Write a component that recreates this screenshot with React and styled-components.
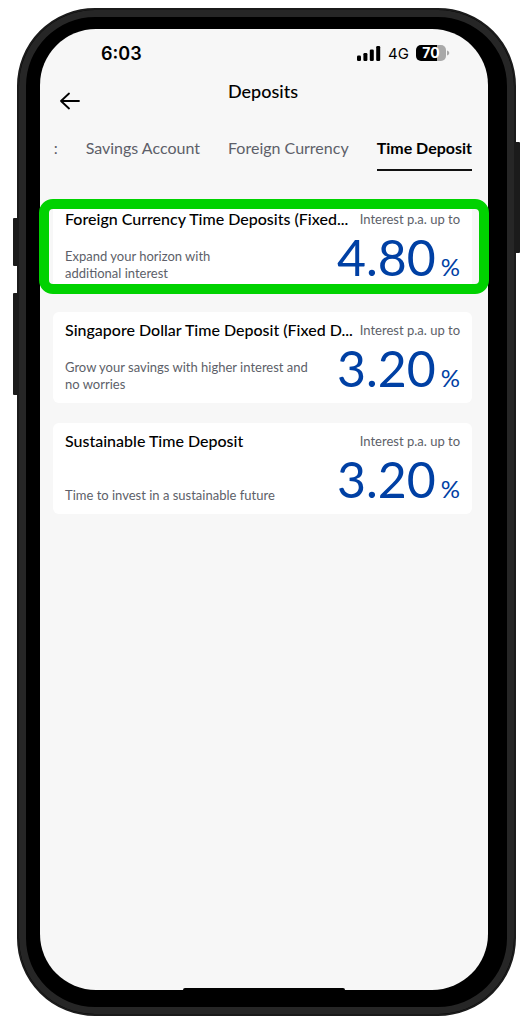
import React from 'react'
import styled, { createGlobalStyle } from 'styled-components'

const tabs = [':', 'Savings Account', 'Foreign Currency', 'Time Deposit']

const deposits = [
  {
    title: 'Foreign Currency Time Deposits (Fixed...',
    description: ['Expand your horizon with', 'additional interest'],
    rate: '4.80',
    highlighted: true,
  },
  {
    title: 'Singapore Dollar Time Deposit (Fixed D...',
    description: ['Grow your savings with higher interest and', 'no worries'],
    rate: '3.20',
  },
  {
    title: 'Sustainable Time Deposit',
    description: ['Time to invest in a sustainable future'],
    rate: '3.20',
  },
]

function StatusBar() {
  return (
    <Status>
      <Clock>6:03</Clock>
      <StatusIcons>
        <svg width="24" height="15" viewBox="0 0 24 15" aria-hidden="true">
          <rect x="0" y="9.5" width="4" height="5.5" rx="1.2" />
          <rect x="6.4" y="7" width="4" height="8" rx="1.2" />
          <rect x="12.8" y="3.5" width="4" height="11.5" rx="1.2" />
          <rect x="19.2" y="0" width="4" height="15" rx="1.2" />
        </svg>
        <Network>4G</Network>
        <Battery>
          <BatteryLevel>70</BatteryLevel>
          <svg width="3" height="6" viewBox="0 0 3 6" aria-hidden="true">
            <path d="M0 0.5C3 1.2 3 4.8 0 5.5Z" fill="#a9a9a9" />
          </svg>
        </Battery>
      </StatusIcons>
    </Status>
  )
}

function DepositCard({ title, description, rate, highlighted }) {
  return (
    <Card>
      <CardText>
        <h2>{title}</h2>
        <p>
          {description.map((line) => (
            <span key={line}>{line}</span>
          ))}
        </p>
      </CardText>
      <Rate>
        <RateLabel>Interest p.a. up to</RateLabel>
        <RateValue>
          {rate}
          <small>%</small>
        </RateValue>
      </Rate>
      {highlighted && <Highlight />}
    </Card>
  )
}

export default function App() {
  return (
    <>
      <GlobalStyle />
      <Phone>
        <SideKey side="left" top={208} length={48} />
        <SideKey side="left" top={283} length={102} />
        <SideKey side="right" top={132} length={111} />
        <Screen>
          <StatusBar />
          <Header>
            <BackButton aria-label="Back">
              <svg width="20" height="18" viewBox="0 0 20 18" aria-hidden="true">
                <path
                  d="M19 9H1M9 1.5L1 9L9 16.5"
                  fill="none"
                  stroke="#000"
                  strokeWidth="1.8"
                  strokeLinecap="round"
                  strokeLinejoin="round"
                />
              </svg>
            </BackButton>
            <h1>Deposits</h1>
          </Header>
          <Tabs>
            {tabs.map((tab) => (
              <Tab key={tab} active={tab === 'Time Deposit' ? 1 : 0}>
                {tab}
              </Tab>
            ))}
          </Tabs>
          <CardList>
            {deposits.map((deposit) => (
              <DepositCard key={deposit.title} {...deposit} />
            ))}
          </CardList>
          <HomeBar />
        </Screen>
      </Phone>
    </>
  )
}

const GlobalStyle = createGlobalStyle`
  * {
    box-sizing: border-box;
  }
  body {
    margin: 0;
    background: #fff;
    font-family: Lato, "Open Sans", sans-serif;
    color: #000;
  }
  h1, h2, p {
    margin: 0;
  }
  button {
    padding: 0;
    border: 0;
    background: none;
    color: inherit;
    font: inherit;
    cursor: pointer;
  }
`

const Phone = styled.div`
  position: relative;
  display: flex;
  min-height: calc(100vh - 16px);
  margin: 8px 15px 8px 17px;
  padding: 19px 26px 24px 21px;
  border: 2px solid #1b1b1b;
  border-radius: 78px;
  background: #000;
  box-shadow: inset 0 0 0 7px #262626;
`

const SideKey = styled.div`
  position: absolute;
  ${(props) => props.side}: -6px;
  top: ${(props) => props.top}px;
  width: 5px;
  height: ${(props) => props.length}px;
  border-radius: 1px;
  background: #1b1b1b;
`

const Screen = styled.main`
  flex: 1;
  min-width: 0;
  display: flex;
  flex-direction: column;
  border-radius: 56px;
  background: #f7f7f7;
`

const Status = styled.div`
  display: flex;
  justify-content: space-between;
  align-items: center;
  height: 48px;
  padding: 0 38px 0 61px;
  font-family: Inter, sans-serif;
`

const Clock = styled.span`
  font-size: 18px;
  font-weight: 600;
`

const StatusIcons = styled.div`
  display: flex;
  align-items: center;
  gap: 7px;
`

const Network = styled.span`
  font-size: 15px;
`

const Battery = styled.div`
  display: flex;
  align-items: center;
  gap: 1px;
`

const BatteryLevel = styled.span`
  width: 30px;
  height: 16px;
  border-radius: 5px;
  background: linear-gradient(to right, #000 70%, #a9a9a9 70%);
  color: #fff;
  font-size: 14px;
  font-weight: 700;
  line-height: 16px;
  text-align: center;
`

const Header = styled.header`
  display: grid;
  grid-template-columns: 40px 1fr 40px;
  height: 40px;
  padding: 0 12px 0 10px;

  h1 {
    font-size: 18px;
    font-weight: 500;
    line-height: 28px;
    text-align: center;
  }
`

const BackButton = styled.button`
  display: flex;
  align-items: center;
  justify-content: center;
  height: 48px;
`

const Tabs = styled.nav`
  display: flex;
  justify-content: flex-end;
  gap: 28px;
  margin-top: 16px;
  padding: 0 16px 0 12px;
`

const Tab = styled.button`
  height: 38px;
  padding-bottom: 8px;
  border-bottom: 2px solid ${(props) => (props.active ? '#111' : 'transparent')};
  color: ${(props) => (props.active ? '#000' : '#5d5f69')};
  font-size: 16px;
  font-weight: ${(props) => (props.active ? 700 : 400)};
  white-space: nowrap;
`

const CardList = styled.section`
  flex: 1;
  display: flex;
  flex-direction: column;
  gap: 20px;
  padding: 30px 16px 30px 13px;
`

const Card = styled.article`
  position: relative;
  display: flex;
  justify-content: space-between;
  height: 91px;
  padding: 8px 12px 10px;
  border-radius: 6px;
  background: #fff;
`

const CardText = styled.div`
  display: flex;
  flex-direction: column;
  justify-content: space-between;
  min-width: 0;
  white-space: nowrap;

  h2 {
    font-size: 16px;
    font-weight: 500;
    line-height: 20px;
  }
  p {
    color: #5d5f69;
    font-size: 13px;
    line-height: 17px;
  }
  span {
    display: block;
  }
`

const Rate = styled.div`
  display: flex;
  flex-direction: column;
  align-items: flex-end;
  white-space: nowrap;
`

const RateLabel = styled.span`
  color: #5d5f69;
  font-size: 13px;
  line-height: 20px;
`

const RateValue = styled.strong`
  color: #0040a4;
  font-size: 50px;
  font-weight: 400;
  line-height: 56px;

  small {
    margin-left: 5px;
    font-size: 24px;
  }
`

// marker drawn round the best offer
const Highlight = styled.div`
  position: absolute;
  inset: -2px -17px -2px -14px;
  border: 10px solid #00d200;
  border-radius: 14px;
  pointer-events: none;
`

const HomeBar = styled.div`
  align-self: center;
  width: 36%;
  height: 2px;
  border-radius: 2px 2px 0 0;
  background: #000;
`
